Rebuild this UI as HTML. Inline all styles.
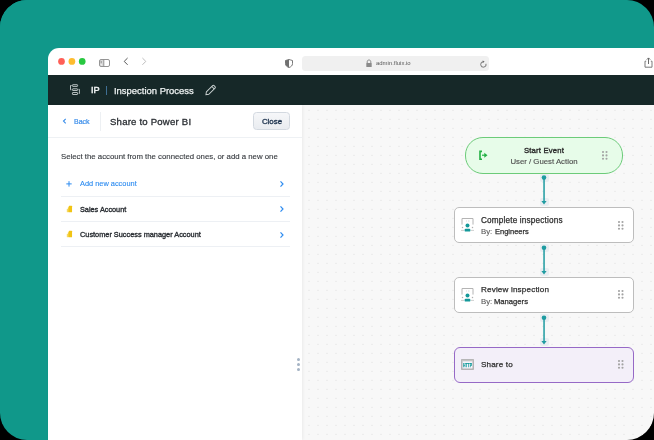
<!DOCTYPE html>
<html><head><meta charset="utf-8"><style>
html,body{margin:0;padding:0;background:#000;width:654px;height:440px;overflow:hidden}
#frame{position:absolute;left:0;top:0;width:654px;height:440px;border-radius:27px;overflow:hidden}
.b{position:absolute}
.t{position:absolute;will-change:transform;white-space:nowrap;line-height:1;font-family:"Liberation Sans",sans-serif}
</style></head><body><div id="frame">
<div class="b" style="left:0px;top:0px;width:654px;height:48px;background:#10988a;"></div>
<div class="b" style="left:0px;top:0px;width:48px;height:440px;background:#10988a;"></div>
<div class="b" style="left:47px;top:47px;width:15px;height:15px;background:#10988a;"></div>
<div class="b" style="left:48px;top:48px;width:652px;height:27px;background:#fff;border-top-left-radius:11px;"></div>
<svg class="b" style="left:54px;top:54px" width="36" height="15"><circle cx="7.5" cy="7.4" r="3.35" fill="#ff5f57"/><circle cx="17.9" cy="7.4" r="3.35" fill="#febc2e"/><circle cx="28.2" cy="7.4" r="3.35" fill="#28c840"/></svg>
<svg class="b" style="left:98px;top:58px" width="13" height="10" viewBox="0 0 13 10">
<rect x="2" y="2" width="3.8" height="6" fill="#d9d9d9"/>
<rect x="2.7" y="3" width="0.9" height="2.2" fill="#8a8a8a"/>
<rect x="2.7" y="6.2" width="0.9" height="1.2" fill="#ffffff"/>
<rect x="1.5" y="1.5" width="10" height="7" rx="1.5" fill="none" stroke="#8f8f8f" stroke-width="0.95"/>
<line x1="5.8" y1="1.5" x2="5.8" y2="8.5" stroke="#8f8f8f" stroke-width="0.95"/>
</svg>
<svg class="b" style="left:122px;top:56px" width="26" height="11" viewBox="0 0 26 11">
<polyline points="5.6,2 2.2,5.4 5.6,8.8" fill="none" stroke="#555" stroke-width="1"/>
<polyline points="20.4,2 23.8,5.4 20.4,8.8" fill="none" stroke="#bdbdbd" stroke-width="1"/>
</svg>
<svg class="b" style="left:284px;top:58px" width="10" height="11" viewBox="0 0 10 11">
<path d="M5 1.5 C6.3 1.9 7.4 2.2 8.5 2.5 V5.6 C8.5 7.6 7 8.9 5 9.5 C3 8.9 1.5 7.6 1.5 5.6 V2.5 C2.6 2.2 3.7 1.9 5 1.5 Z" fill="none" stroke="#707070" stroke-width="0.95"/>
<path d="M5 1.5 C3.7 1.9 2.6 2.2 1.5 2.5 V5.6 C1.5 7.6 3 8.9 5 9.5 Z" fill="#707070"/>
</svg>
<div class="b" style="left:302px;top:56px;width:187px;height:14.5px;background:#f0f0f0;border-radius:3.5px;"></div>
<svg class="b" style="left:365px;top:59px" width="8" height="9" viewBox="0 0 8 9">
<path d="M2.2 4 V2.8 C2.2 1.6 3 1 4 1 C5 1 5.8 1.6 5.8 2.8 V4" fill="none" stroke="#8a8a8a" stroke-width="1"/>
<rect x="1.3" y="4" width="5.4" height="4" rx="0.6" fill="#8a8a8a"/>
</svg>
<div class="t" style="left:375.7px;top:60.56px;font-size:5.95px;color:#5a5a5a;font-weight:400;letter-spacing:0px;">admin.fluix.io</div>
<svg class="b" style="left:479px;top:60px" width="9" height="9" viewBox="0 0 9 9">
<path d="M4.6 1.8 A2.7 2.7 0 1 0 7 3.8" fill="none" stroke="#6a6a6a" stroke-width="0.9"/>
<path d="M3.6 0.4 L5.6 1.6 L3.8 3 Z" fill="#6a6a6a"/>
</svg>
<svg class="b" style="left:643px;top:57px" width="11" height="12" viewBox="0 0 11 12">
<path d="M3.2 4.2 H2 V10.2 H9 V4.2 H7.8" fill="none" stroke="#7a7a7a" stroke-width="1"/>
<line x1="5.5" y1="1" x2="5.5" y2="7" stroke="#6a6a6a" stroke-width="1"/>
<polyline points="3.8,2.6 5.5,0.9 7.2,2.6" fill="none" stroke="#6a6a6a" stroke-width="1"/>
</svg>
<div class="b" style="left:48px;top:75px;width:652px;height:30px;background:#162828;"></div>
<svg class="b" style="left:68px;top:82px" width="14" height="15" viewBox="0 0 14 15">
<g fill="none" stroke="#c6cece" stroke-width="0.9">
<rect x="4.4" y="2.7" width="5.2" height="1.7" rx="0.5"/>
<rect x="4.4" y="6.8" width="5.2" height="1.7" rx="0.5"/>
<rect x="4.4" y="10.5" width="5.2" height="2.0" rx="0.5"/>
<path d="M3.6 3.5 H2.5 V7.8 H3.3"/>
<path d="M10.6 7.3 H11.4 V11.6 H10.8"/>
</g></svg>
<div class="t" style="left:90.7px;top:86.11px;font-size:9.2px;color:#eef2f2;font-weight:400;letter-spacing:0px;-webkit-text-stroke:0.45px #eef2f2;">IP</div>
<div class="b" style="left:106px;top:85.5px;width:1px;height:9.5px;background:#3f6f94;"></div>
<div class="t" style="left:113.5px;top:85.80px;font-size:9.45px;color:#eef2f2;font-weight:400;letter-spacing:0px;-webkit-text-stroke:0.25px #eef2f2;">Inspection Process</div>
<svg class="b" style="left:203px;top:83px" width="15" height="15" viewBox="0 0 15 15">
<g fill="none" stroke="#c9d0d0" stroke-width="0.95" transform="translate(7.6 7.1) rotate(-45)">
<path d="M-4.3 -1.7 H4.6 Q5.6 -1.7 5.6 -0.7 V0.7 Q5.6 1.7 4.6 1.7 H-4.3 L-6.6 0 Z"/>
<line x1="3.4" y1="-1.7" x2="3.4" y2="1.7"/>
</g></svg>
<svg class="b" style="left:302px;top:105px" width="352" height="335"><defs><pattern id="dp" patternUnits="userSpaceOnUse" width="9" height="9"><rect x="6" y="4.8" width="2" height="1.2" fill="#ededed"/></pattern></defs><rect width="352" height="335" fill="#f8f8f8"/><rect width="352" height="335" fill="url(#dp)"/></svg>
<div class="b" style="left:48px;top:105px;width:254px;height:335px;background:#fff;box-shadow:1px 0 3px rgba(0,0,0,0.06);"></div>
<svg class="b" style="left:61px;top:117px" width="7" height="8" viewBox="0 0 7 8">
<polyline points="4.7,1.8 2.5,4.1 4.7,6.4" fill="none" stroke="#3b8eea" stroke-width="1.15"/>
</svg>
<div class="t" style="left:74.2px;top:117.97px;font-size:7.0px;color:#3b8eea;font-weight:400;letter-spacing:0px;-webkit-text-stroke:0.2px #3b8eea;">Back</div>
<div class="b" style="left:100px;top:112px;width:1px;height:18.5px;background:#edf0f3;"></div>
<div class="t" style="left:109.8px;top:116.87px;font-size:9.6px;color:#2a2e33;font-weight:400;letter-spacing:0.2px;-webkit-text-stroke:0.3px #2a2e33;">Share to Power BI</div>
<div class="b" style="left:253px;top:112px;width:37px;height:17.5px;border:1px solid #d3d9e0;border-radius:3.5px;background:linear-gradient(#f6f7f9,#e9ecf0);box-sizing:border-box;"></div>
<div class="t" style="left:121.69999999999999px;width:300px;text-align:center;top:117.51px;font-size:7.9px;color:#1f3550;font-weight:400;letter-spacing:0px;-webkit-text-stroke:0.35px #1f3550;">Close</div>
<div class="b" style="left:48px;top:137px;width:254px;height:1px;background:#eef1f4;"></div>
<div class="t" style="left:60.8px;top:153.30px;font-size:7.8px;color:#363a3f;font-weight:400;letter-spacing:0px;-webkit-text-stroke:0.12px #363a3f;">Select the account from the connected ones, or add a new one</div>
<div class="b" style="left:61px;top:196px;width:229px;height:1px;background:#edf0f4;"></div>
<div class="b" style="left:61px;top:221px;width:229px;height:1px;background:#edf0f4;"></div>
<div class="b" style="left:61px;top:246px;width:229px;height:1px;background:#edf0f4;"></div>
<svg class="b" style="left:65px;top:180px" width="8" height="8" viewBox="0 0 8 8">
<path d="M4 1.2 V6.6 M1.3 3.9 H6.7" stroke="#2e8cf0" stroke-width="1"/>
</svg>
<div class="t" style="left:79.7px;top:179.94px;font-size:7.4px;color:#2e8cf0;font-weight:400;letter-spacing:0px;-webkit-text-stroke:0.12px #2e8cf0;">Add new account</div>
<svg class="b" style="left:278px;top:179.5px" width="8" height="8" viewBox="0 0 8 8">
<polyline points="2.5,1.3 5,4 2.5,6.7" fill="none" stroke="#2e8cf0" stroke-width="1.2"/>
</svg>
<svg class="b" style="left:278px;top:205.3px" width="8" height="8" viewBox="0 0 8 8">
<polyline points="2.5,1.3 5,4 2.5,6.7" fill="none" stroke="#2e8cf0" stroke-width="1.2"/>
</svg>
<svg class="b" style="left:278px;top:230.5px" width="8" height="8" viewBox="0 0 8 8">
<polyline points="2.5,1.3 5,4 2.5,6.7" fill="none" stroke="#2e8cf0" stroke-width="1.2"/>
</svg>
<svg class="b" style="left:66px;top:205px" width="7" height="8" viewBox="0 0 7 8">
<rect x="0.8" y="3.85" width="1.3" height="3.35" fill="#f6da6a"/>
<rect x="1.9" y="2.25" width="1.1" height="4.95" fill="#f4cf40"/>
<rect x="2.85" y="0.8" width="3.2" height="6.4" rx="0.5" fill="#f1c414"/>
</svg>
<svg class="b" style="left:66px;top:230px" width="7" height="8" viewBox="0 0 7 8">
<rect x="0.8" y="3.85" width="1.3" height="3.35" fill="#f6da6a"/>
<rect x="1.9" y="2.25" width="1.1" height="4.95" fill="#f4cf40"/>
<rect x="2.85" y="0.8" width="3.2" height="6.4" rx="0.5" fill="#f1c414"/>
</svg>
<div class="t" style="left:79.5px;top:206.42px;font-size:7.3px;color:#2a2e33;font-weight:400;letter-spacing:0px;-webkit-text-stroke:0.35px #2a2e33;">Sales Account</div>
<div class="t" style="left:79.5px;top:231.38px;font-size:7.35px;color:#2a2e33;font-weight:400;letter-spacing:0px;-webkit-text-stroke:0.35px #2a2e33;">Customer Success manager Account</div>
<div class="b" style="left:296.6px;top:357.7px;width:3.2px;height:3.2px;border-radius:50%;background:#a4b3c4"></div>
<div class="b" style="left:296.6px;top:362.9px;width:3.2px;height:3.2px;border-radius:50%;background:#a4b3c4"></div>
<div class="b" style="left:296.6px;top:368.09999999999997px;width:3.2px;height:3.2px;border-radius:50%;background:#a4b3c4"></div>
<div class="b" style="left:465px;top:137px;width:158px;height:36.5px;border:1px solid #6ccb79;border-radius:18px;background:#e7fce9;box-sizing:border-box;"></div>
<svg class="b" style="left:477px;top:149px" width="12" height="12" viewBox="0 0 12 12">
<path d="M5 2.4 H3 V10.3 H5" fill="none" stroke="#22b043" stroke-width="1.6"/>
<line x1="5" y1="6.2" x2="8" y2="6.2" stroke="#22b043" stroke-width="1.2"/>
<path d="M7.3 3.7 L10.5 6.2 L7.3 8.7 Z" fill="#22b043"/>
</svg>
<div class="t" style="left:394.20000000000005px;width:300px;text-align:center;top:147.08px;font-size:7.7px;color:#2b2b2b;font-weight:400;letter-spacing:0.2px;-webkit-text-stroke:0.35px #2b2b2b;">Start Event</div>
<div class="t" style="left:394px;width:300px;text-align:center;top:158.20px;font-size:7.8px;color:#505050;font-weight:400;letter-spacing:0px;-webkit-text-stroke:0.15px #505050;">User / Guest Action</div>
<svg class="b" style="left:601px;top:149.8px" width="9" height="11"><circle cx="2.00" cy="2.00" r="1.05" fill="#a3a3a3"/><circle cx="5.50" cy="2.00" r="1.05" fill="#a3a3a3"/><circle cx="2.00" cy="5.40" r="1.05" fill="#a3a3a3"/><circle cx="5.50" cy="5.40" r="1.05" fill="#a3a3a3"/><circle cx="2.00" cy="8.80" r="1.05" fill="#a3a3a3"/><circle cx="5.50" cy="8.80" r="1.05" fill="#a3a3a3"/></svg>
<div class="b" style="left:540px;top:174px;width:8.5px;height:7.5px;background:#e8edf1;border-radius:2px;"></div><div class="b" style="left:539.5px;top:198px;width:9.0px;height:8px;background:#e8edf1;border-radius:2px;"></div><svg class="b" style="left:540px;top:173px" width="8" height="9"><circle cx="4" cy="4.6" r="2.3" fill="#1f9ca1"/></svg><svg class="b" style="left:540px;top:177px" width="8" height="25"><rect x="3.3" y="0.5" width="1.5" height="24" fill="#1f9ca1"/></svg><svg class="b" style="left:541px;top:200px" width="6" height="5" viewBox="0 0 6 5"><path d="M0.4 1.1 H5.6 L3 4.5 Z" fill="#1f9ca1"/></svg>
<div class="b" style="left:454px;top:207px;width:180px;height:36px;border:1px solid #bdbdbd;border-radius:5px;background:#fff;box-sizing:border-box;"></div>
<svg class="b" style="left:460px;top:217px" width="15" height="16" viewBox="0 0 15 16">
<path d="M2 7.6 V1.5 H13 V7.6" fill="none" stroke="#b4b4b4" stroke-width="1"/>
<line x1="6" y1="4" x2="7" y2="4" stroke="#d2d2d2" stroke-width="0.8"/>
<line x1="8" y1="4" x2="9.5" y2="4" stroke="#d2d2d2" stroke-width="0.8"/>
<circle cx="7.5" cy="8.6" r="2" fill="#15999a"/>
<rect x="4.6" y="11.7" width="5.8" height="2.9" rx="1.2" fill="#15999a"/>
<circle cx="2.5" cy="10.6" r="0.75" fill="#b0b0b0"/><circle cx="12.5" cy="10.6" r="0.75" fill="#b0b0b0"/>
<line x1="1" y1="13.4" x2="4" y2="13.4" stroke="#c8c8c8" stroke-width="0.9"/>
<line x1="11" y1="13.4" x2="14" y2="13.4" stroke="#c8c8c8" stroke-width="0.9"/>
</svg>
<div class="t" style="left:481.4px;top:216.56px;font-size:8.2px;color:#2e2e2e;font-weight:400;letter-spacing:0.17px;-webkit-text-stroke:0.25px #2e2e2e;">Complete inspections</div>
<div class="t" style="left:481.3px;top:227.60px;font-size:7.8px;color:#585858;font-weight:400;letter-spacing:0px;-webkit-text-stroke:0.1px #585858;">By:</div>
<div class="t" style="left:494.5px;top:227.65px;font-size:7.5px;color:#2e2e2e;font-weight:400;letter-spacing:0px;-webkit-text-stroke:0.25px #2e2e2e;">Engineers</div>
<svg class="b" style="left:616.9px;top:219.7px" width="9" height="11"><circle cx="2.00" cy="2.00" r="1.05" fill="#a3a3a3"/><circle cx="5.50" cy="2.00" r="1.05" fill="#a3a3a3"/><circle cx="2.00" cy="5.40" r="1.05" fill="#a3a3a3"/><circle cx="5.50" cy="5.40" r="1.05" fill="#a3a3a3"/><circle cx="2.00" cy="8.80" r="1.05" fill="#a3a3a3"/><circle cx="5.50" cy="8.80" r="1.05" fill="#a3a3a3"/></svg>
<div class="b" style="left:540px;top:244px;width:8.5px;height:7.5px;background:#e8edf1;border-radius:2px;"></div><div class="b" style="left:539.5px;top:268px;width:9.0px;height:8px;background:#e8edf1;border-radius:2px;"></div><svg class="b" style="left:540px;top:243px" width="8" height="9"><circle cx="4" cy="4.8" r="2.3" fill="#1f9ca1"/></svg><svg class="b" style="left:540px;top:247px" width="8" height="25"><rect x="3.3" y="0.5" width="1.5" height="24" fill="#1f9ca1"/></svg><svg class="b" style="left:541px;top:270px" width="6" height="5" viewBox="0 0 6 5"><path d="M0.4 1.1 H5.6 L3 4.5 Z" fill="#1f9ca1"/></svg>
<div class="b" style="left:454px;top:277px;width:180px;height:36px;border:1px solid #bdbdbd;border-radius:5px;background:#fff;box-sizing:border-box;"></div>
<svg class="b" style="left:460px;top:287px" width="15" height="16" viewBox="0 0 15 16">
<path d="M2 7.6 V1.5 H13 V7.6" fill="none" stroke="#b4b4b4" stroke-width="1"/>
<line x1="6" y1="4" x2="7" y2="4" stroke="#d2d2d2" stroke-width="0.8"/>
<line x1="8" y1="4" x2="9.5" y2="4" stroke="#d2d2d2" stroke-width="0.8"/>
<circle cx="7.5" cy="8.6" r="2" fill="#15999a"/>
<rect x="4.6" y="11.7" width="5.8" height="2.9" rx="1.2" fill="#15999a"/>
<circle cx="2.5" cy="10.6" r="0.75" fill="#b0b0b0"/><circle cx="12.5" cy="10.6" r="0.75" fill="#b0b0b0"/>
<line x1="1" y1="13.4" x2="4" y2="13.4" stroke="#c8c8c8" stroke-width="0.9"/>
<line x1="11" y1="13.4" x2="14" y2="13.4" stroke="#c8c8c8" stroke-width="0.9"/>
</svg>
<div class="t" style="left:481.4px;top:286.44px;font-size:8.1px;color:#2e2e2e;font-weight:400;letter-spacing:0.17px;-webkit-text-stroke:0.25px #2e2e2e;">Review inspection</div>
<div class="t" style="left:481.3px;top:297.70px;font-size:7.8px;color:#585858;font-weight:400;letter-spacing:0px;-webkit-text-stroke:0.1px #585858;">By:</div>
<div class="t" style="left:494.3px;top:297.82px;font-size:7.65px;color:#2e2e2e;font-weight:400;letter-spacing:0px;-webkit-text-stroke:0.25px #2e2e2e;">Managers</div>
<svg class="b" style="left:616.8px;top:289.0px" width="9" height="11"><circle cx="2.00" cy="2.00" r="1.05" fill="#a3a3a3"/><circle cx="5.50" cy="2.00" r="1.05" fill="#a3a3a3"/><circle cx="2.00" cy="5.40" r="1.05" fill="#a3a3a3"/><circle cx="5.50" cy="5.40" r="1.05" fill="#a3a3a3"/><circle cx="2.00" cy="8.80" r="1.05" fill="#a3a3a3"/><circle cx="5.50" cy="8.80" r="1.05" fill="#a3a3a3"/></svg>
<div class="b" style="left:540px;top:314px;width:8.5px;height:7.5px;background:#e8edf1;border-radius:2px;"></div><div class="b" style="left:539.5px;top:338px;width:9.0px;height:8px;background:#e8edf1;border-radius:2px;"></div><svg class="b" style="left:540px;top:313px" width="8" height="9"><circle cx="4" cy="4.8" r="2.3" fill="#1f9ca1"/></svg><svg class="b" style="left:540px;top:317px" width="8" height="25"><rect x="3.3" y="0.5" width="1.5" height="24" fill="#1f9ca1"/></svg><svg class="b" style="left:541px;top:340px" width="6" height="5" viewBox="0 0 6 5"><path d="M0.4 1.1 H5.6 L3 4.5 Z" fill="#1f9ca1"/></svg>
<div class="b" style="left:454px;top:347px;width:180px;height:35.69999999999999px;border:1.8px solid #9669c6;border-radius:6px;background:#f3eff9;box-sizing:border-box;"></div>
<svg class="b" style="left:460px;top:358px;will-change:transform" width="15" height="13" viewBox="0 0 15 13">
<rect x="1.8" y="1.8" width="11.4" height="9.4" fill="#f7f4fb" stroke="#a9a9a9" stroke-width="1.3"/>
<rect x="1.8" y="1.8" width="11.4" height="1.5" fill="#c4c4c4"/>
<text x="3" y="8.7" textLength="9" lengthAdjust="spacingAndGlyphs" font-family="Liberation Sans" font-weight="700" font-size="5" fill="#119a9a" stroke="#119a9a" stroke-width="0.25">HTTP</text>
</svg>
<div class="t" style="left:481.4px;top:360.74px;font-size:8.1px;color:#2e2e2e;font-weight:400;letter-spacing:0.15px;-webkit-text-stroke:0.25px #2e2e2e;">Share to</div>
<svg class="b" style="left:616.8px;top:359.0px" width="9" height="11"><circle cx="2.00" cy="2.00" r="1.05" fill="#a3a3a3"/><circle cx="5.50" cy="2.00" r="1.05" fill="#a3a3a3"/><circle cx="2.00" cy="5.40" r="1.05" fill="#a3a3a3"/><circle cx="5.50" cy="5.40" r="1.05" fill="#a3a3a3"/><circle cx="2.00" cy="8.80" r="1.05" fill="#a3a3a3"/><circle cx="5.50" cy="8.80" r="1.05" fill="#a3a3a3"/></svg>
</div></body></html>
